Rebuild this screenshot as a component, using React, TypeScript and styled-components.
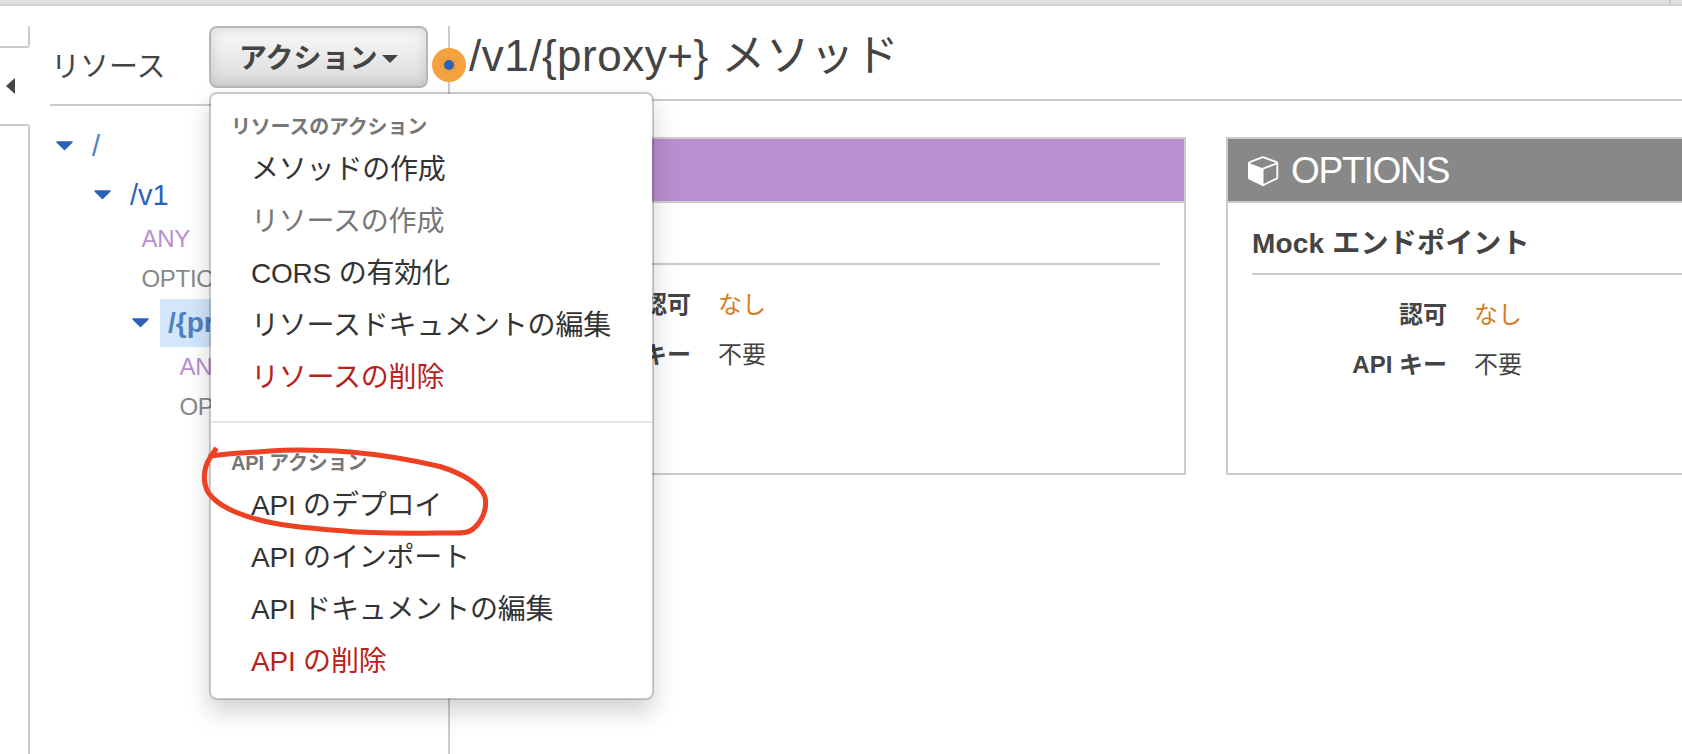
import React from "react";
import styled, { createGlobalStyle } from "styled-components";

const Global = createGlobalStyle`
  * { box-sizing: border-box; }
  body {
    margin: 0;
    background: #fff;
    color: #444;
    font-family: "Liberation Sans", "Noto Sans CJK JP", sans-serif;
    overflow: hidden;
  }
`;

const Page = styled.div`
  display: flex;
  flex-direction: column;
  width: 1682px;
  height: 754px;
  overflow: hidden;
  position: relative;
`;

const TopBar = styled.div`
  flex: none;
  display: flex;
  justify-content: flex-end;
  height: 6px;
  padding-right: 11px;
  background: #e0e0e0;
  border-bottom: 2px solid #d3d3d3;
`;

const TopBarDivider = styled.div`
  width: 2px;
  background: #c8c8c8;
`;

const Body = styled.div`
  flex: 1;
  display: flex;
  padding-top: 20px;
`;

const Rail = styled.div`
  width: 30px;
  display: flex;
  flex-direction: column;
`;

const RailTop = styled.div`
  height: 22px;
  border: solid #ccc;
  border-width: 0 2px 2px 0;
  border-bottom-right-radius: 3px;
`;

const RailToggle = styled.div`
  height: 76px;
  padding: 30px 0 0 6px;
  svg { display: block; }
`;

const RailPanel = styled.div`
  flex: 1;
  border: solid #ccc;
  border-width: 2px 2px 0 0;
  border-top-right-radius: 3px;
`;

const Sidebar = styled.div`
  position: relative;
  width: 420px;
  padding-left: 20px;
  border-right: 2px solid #ccc;
`;

const SidebarHeader = styled.div`
  height: 80px;
  display: flex;
  align-items: flex-start;
  border-bottom: 2px solid #ccc;
`;

const SidebarTitle = styled.div`
  width: 159px;
  padding-left: 1px;
  font-size: 29px;
  line-height: 82px;
  height: 78px;
`;

const ActionButton = styled.button`
  flex: none;
  width: 219px;
  height: 62px;
  display: flex;
  align-items: center;
  gap: 4px;
  padding: 0 0 3px 28px;
  border: 2px solid #b7b7b7;
  border-radius: 8px;
  background: linear-gradient(#f5f5f5 15%, #dadada);
  box-shadow: inset 0 0 14px rgba(0, 0, 0, 0.13);
  font: bold 28px "Liberation Sans", "Noto Sans CJK JP", sans-serif;
  color: #444;
  svg { margin-top: 6px; }
`;

const Badge = styled.svg`
  position: absolute;
  z-index: 1;
  left: 402px;
  top: 22px;
`;

const Tree = styled.div`
  display: flex;
  flex-direction: column;
  padding-top: 16px;
`;

const ResourceRow = styled.div<{ $depth: number }>`
  display: flex;
  align-items: center;
  height: 48px;
  margin-bottom: ${(p) => (p.$depth === 0 ? 1 : 0)}px;
  padding-left: ${(p) => 6 + p.$depth * 38}px;
`;

const ResourceName = styled.div<{ $selected?: boolean; $light?: boolean }>`
  margin-left: 11px;
  padding: 0 8px;
  height: 48px;
  line-height: 48px;
  font-size: ${(p) => (p.$selected ? 28 : 29)}px;
  font-weight: ${(p) => (p.$selected ? 700 : 400)};
  color: ${(p) => (p.$selected || p.$light ? "#4f81c0" : "#2b62b9")};
  background: ${(p) => (p.$selected ? "#d3e6fc" : "transparent")};
`;

const MethodRow = styled.div<{ $depth: number; $any?: boolean }>`
  height: 40px;
  line-height: 40px;
  padding-left: ${(p) => 53.5 + p.$depth * 38}px;
  font-size: 24px;
  letter-spacing: -0.3px;
  color: ${(p) => (p.$any ? "#b98fcf" : "#888")};
`;

const Menu = styled.div`
  position: absolute;
  z-index: 2;
  left: 209px;
  top: 92px;
  width: 445px;
  height: 608px;
  padding: 17px 0;
  background: #fff;
  background-clip: padding-box;
  border: 2px solid rgba(0, 0, 0, 0.2);
  border-radius: 8px;
  box-shadow: 0 12px 24px rgba(0, 0, 0, 0.18);
`;

const MenuHeading = styled.div`
  height: 33px;
  line-height: 33px;
  padding-left: 20px;
  font-size: 20px;
  font-weight: 700;
  letter-spacing: -0.2px;
  color: #777;
`;

const MenuItem = styled.div<{ $tone?: "muted" | "danger" }>`
  height: 52px;
  line-height: 52px;
  padding-left: 40px;
  font-size: 28px;
  letter-spacing: -0.2px;
  white-space: nowrap;
  color: ${(p) =>
    p.$tone === "muted" ? "#777" : p.$tone === "danger" ? "#b9211a" : "#333"};
`;

const MenuDivider = styled.div`
  height: 2px;
  margin: 17px 0 24px;
  background: #e5e5e5;
`;

const Main = styled.div`
  flex: 1;
  min-width: 0;
`;

const MainHeader = styled.h1`
  margin: 0;
  height: 75px;
  line-height: 60px;
  padding-left: 19px;
  border-bottom: 2px solid #ccc;
  font-size: 44px;
  font-weight: 400;
  letter-spacing: 0.5px;
  white-space: nowrap;
`;

const Cards = styled.div`
  display: flex;
  gap: 40px;
  padding: 36px 0 0 20px;
`;

const Card = styled.section`
  flex: none;
  width: 716px;
  height: 338px;
  border: 2px solid #ccc;
`;

const CardHeader = styled.div<{ $color: string }>`
  height: 64px;
  display: flex;
  align-items: center;
  gap: 12px;
  padding: 2px 0 0 20px;
  border-bottom: 2px solid #ccc;
  background: ${(p) => p.$color};
  color: #fff;
  font-size: 37px;
  line-height: 60px;
  letter-spacing: -1.2px;
`;

const CardBody = styled.div`
  padding: 0 24px;
`;

const CardTitle = styled.div<{ $height: number }>`
  height: ${(p) => p.$height}px;
  line-height: 82px;
  margin-bottom: 15px;
  border-bottom: 2px solid #ccc;
  font-size: 28px;
  font-weight: 700;
  letter-spacing: 0.2px;
`;

const Field = styled.div`
  display: flex;
  gap: 27px;
  height: 50px;
  line-height: 50px;
  font-size: 24px;
`;

const FieldLabel = styled.div`
  width: 195px;
  text-align: right;
  font-weight: 700;
`;

const FieldValue = styled.div<{ $accent?: boolean }>`
  color: ${(p) => (p.$accent ? "#d67b22" : "#444")};
`;

const Annotation = styled.svg`
  position: absolute;
  z-index: 3;
  left: 190px;
  top: 430px;
  pointer-events: none;
`;

const TreeCaret = () => (
  <svg width="17" height="10" viewBox="0 0 17 10">
    <path d="M0.6 0.3H16.4Q17 0.8 16.4 1.8L8.5 9.6L0.6 1.8Q0 0.8 0.6 0.3Z" fill="#2b62b9" />
  </svg>
);

const Cube = () => (
  <svg width="31" height="31" viewBox="0 0 31 31">
    <path
      d="M15 1.200L28.700 6.200Q29.300 6.600 29.300 7.400V21.400Q29.300 22.200 28.600 22.600L15 29.300L1.600 22.600Q0.900 22.200 0.900 21.400V7.400Q0.900 6.600 1.600 6.200Z"
      fill="none"
      stroke="#fff"
      strokeWidth="1.800"
      strokeLinejoin="round"
    />
    <path d="M0.900 7L15.500 12.400V30L1 22.600Z" fill="#fff" />
    <path d="M15 12.600L29.300 7.200" stroke="#fff" strokeWidth="1.800" />
  </svg>
);

function Fields() {
  return (
    <>
      <Field>
        <FieldLabel>認可</FieldLabel>
        <FieldValue $accent>なし</FieldValue>
      </Field>
      <Field>
        <FieldLabel>API キー</FieldLabel>
        <FieldValue>不要</FieldValue>
      </Field>
    </>
  );
}

export default function App() {
  return (
    <Page>
      <Global />
      <TopBar>
        <TopBarDivider />
      </TopBar>
      <Body>
        <Rail>
          <RailTop />
          <RailToggle>
            <svg width="9" height="16" viewBox="0 0 9 16">
              <path d="M9 0V16L0 8Z" fill="#444" />
            </svg>
          </RailToggle>
          <RailPanel />
        </Rail>
        <Sidebar>
          <SidebarHeader>
            <SidebarTitle>リソース</SidebarTitle>
            <ActionButton>
              アクション
              <svg width="16" height="8" viewBox="0 0 16 8">
                <path d="M0 0H16L8 8Z" fill="#444" />
              </svg>
            </ActionButton>
          </SidebarHeader>
          <Badge width="34" height="34" viewBox="0 0 34 34">
            <circle cx="17" cy="17" r="17" fill="#f3a23f" />
            <circle cx="17" cy="17" r="9" fill="#ee9e3e" />
            <circle cx="17" cy="17" r="5" fill="#2b62b9" />
          </Badge>
          <Tree>
            <ResourceRow $depth={0}>
              <TreeCaret />
              <ResourceName $light>/</ResourceName>
            </ResourceRow>
            <ResourceRow $depth={1}>
              <TreeCaret />
              <ResourceName>/v1</ResourceName>
            </ResourceRow>
            <MethodRow $depth={1} $any>ANY</MethodRow>
            <MethodRow $depth={1}>OPTIONS</MethodRow>
            <ResourceRow $depth={2}>
              <TreeCaret />
              <ResourceName $selected>{"/{proxy+}"}</ResourceName>
            </ResourceRow>
            <MethodRow $depth={2} $any>ANY</MethodRow>
            <MethodRow $depth={2}>OPTIONS</MethodRow>
          </Tree>
        </Sidebar>
        <Main>
          <MainHeader>{"/v1/{proxy+} メソッド"}</MainHeader>
          <Cards>
            <Card>
              <CardHeader $color="#b98fcf" />
              <CardBody>
                <CardTitle $height={62} />
                <Fields />
              </CardBody>
            </Card>
            <Card>
              <CardHeader $color="#888">
                <Cube />
                OPTIONS
              </CardHeader>
              <CardBody>
                <CardTitle $height={72}>Mock エンドポイント</CardTitle>
                <Fields />
              </CardBody>
            </Card>
          </Cards>
        </Main>
      </Body>
      <Menu>
        <MenuHeading>リソースのアクション</MenuHeading>
        <MenuItem>メソッドの作成</MenuItem>
        <MenuItem $tone="muted">リソースの作成</MenuItem>
        <MenuItem>CORS の有効化</MenuItem>
        <MenuItem>リソースドキュメントの編集</MenuItem>
        <MenuItem $tone="danger">リソースの削除</MenuItem>
        <MenuDivider />
        <MenuHeading>API アクション</MenuHeading>
        <MenuItem>API のデプロイ</MenuItem>
        <MenuItem>API のインポート</MenuItem>
        <MenuItem>API ドキュメントの編集</MenuItem>
        <MenuItem $tone="danger">API の削除</MenuItem>
      </Menu>
      <Annotation width="310" height="120" viewBox="0 0 310 120">
        <path
          d="M26.5 18L20.5 27C12 40 12 57 22 67C32 78 48 84 66 89C94 97 130 99 160 101.500C200 104 240 103 266 103C279 103 282 101 288 94C294 86 297 77 295 67C291 55 274 44 250 36.500C220 29.500 190 24.500 160 22C130 20 100 19.500 80 21C58 23 40 23 18.500 26.500"
          fill="none"
          stroke="#ee4023"
          strokeWidth="5"
          strokeLinejoin="round"
        />
      </Annotation>
    </Page>
  );
}
